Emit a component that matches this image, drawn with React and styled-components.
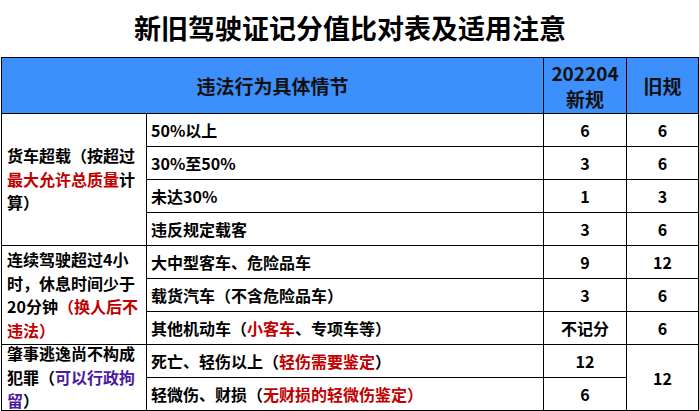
import React from "react";
import styled, { createGlobalStyle } from "styled-components";

const GlobalStyle = createGlobalStyle`
  html, body {
    margin: 0;
    padding: 0;
    background: #ffffff;
  }
  body {
    font-family: "Noto Sans CJK SC", "Noto Sans", sans-serif;
    color: #000;
  }
`;

const Page = styled.div`
  width: 699px;
  height: 411px;
  overflow: hidden;
  padding-left: 1px;
  box-sizing: border-box;
`;

const Title = styled.h1`
  margin: 0;
  height: 57px;
  display: flex;
  align-items: center;
  justify-content: center;
  padding-bottom: 2px;
  box-sizing: border-box;
  font-size: 27px;
  font-weight: 700;
  letter-spacing: 0;
  color: #000;
`;

const Table = styled.table`
  border-collapse: collapse;
  table-layout: fixed;
  width: 697px;

  td,
  th {
    border: 1px solid #000;
    padding: 0;
    box-sizing: border-box;
  }
`;

const Row = styled.tr`
  height: ${(p) => p.$h}px;
`;

const HeadCell = styled.th`
  background: #3d8ffb;
  font-size: 19px;
  font-weight: 700;
  line-height: 26px;
  color: #111;
  text-align: center;
  vertical-align: middle;
`;

const GroupCell = styled.td`
  font-size: 16px;
  font-weight: 700;
  line-height: 23.5px;
  padding-left: 5px !important;
  vertical-align: middle;
  white-space: nowrap;
  overflow: hidden;
`;

const GroupText = styled.div`
  margin: -4px 0 -4px;
`;

const ItemCell = styled.td`
  font-size: 16px;
  font-weight: 700;
  line-height: 22px;
  padding-left: 4px !important;
  vertical-align: middle;
  white-space: nowrap;
  overflow: hidden;
`;

const NumCell = styled.td`
  font-size: 16px;
  font-weight: 700;
  line-height: 22px;
  text-align: center;
  vertical-align: middle;
`;

const Red = styled.span`
  color: #c00000;
`;

const Purple = styled.span`
  color: #4a1aa0;
`;

const rows = [
  {
    group: (
      <>
        货车超载（按超过
        <br />
        <Red>最大允许总质量</Red>计
        <br />
        算）
      </>
    ),
    span: 4,
    items: [
      { text: "50%以上", now: "6", old: "6" },
      { text: "30%至50%", now: "3", old: "6" },
      { text: "未达30%", now: "1", old: "3" },
      { text: "违反规定载客", now: "3", old: "6" },
    ],
  },
  {
    group: (
      <>
        连续驾驶超过4小
        <br />
        时，休息时间少于
        <br />
        20分钟<Red>（换人后不</Red>
        <br />
        <Red>违法）</Red>
      </>
    ),
    span: 3,
    items: [
      { text: "大中型客车、危险品车", now: "9", old: "12" },
      { text: "载货汽车（不含危险品车）", now: "3", old: "6" },
      {
        text: (
          <>
            其他机动车（<Red>小客车</Red>、专项车等）
          </>
        ),
        now: "不记分",
        old: "6",
      },
    ],
  },
  {
    group: (
      <>
        肇事逃逸尚不构成
        <br />
        犯罪（<Purple>可以行政拘</Purple>
        <br />
        <Purple>留</Purple>）
      </>
    ),
    span: 2,
    items: [
      {
        text: (
          <>
            死亡、轻伤以上（<Red>轻伤需要鉴定</Red>）
          </>
        ),
        now: "12",
        old: "12",
        oldSpan: 2,
      },
      {
        text: (
          <>
            轻微伤、财损（<Red>无财损的轻微伤鉴定）</Red>
          </>
        ),
        now: "6",
        old: null,
      },
    ],
  },
];

export default function App() {
  return (
    <Page>
      <GlobalStyle />
      <Title>新旧驾驶证记分值比对表及适用注意</Title>
      <Table>
        <colgroup>
          <col style={{ width: 145 }} />
          <col style={{ width: 397 }} />
          <col style={{ width: 83 }} />
          <col style={{ width: 72 }} />
        </colgroup>
        <tbody>
          <Row $h={56}>
            <HeadCell colSpan={2}>违法行为具体情节</HeadCell>
            <HeadCell>
              202204
              <br />
              新规
            </HeadCell>
            <HeadCell>旧规</HeadCell>
          </Row>
          {rows.map((g, gi) =>
            g.items.map((it, ii) => (
              <Row $h={33} key={`${gi}-${ii}`}>
                {ii === 0 && (
                  <GroupCell rowSpan={g.span}>
                    <GroupText>{g.group}</GroupText>
                  </GroupCell>
                )}
                <ItemCell>{it.text}</ItemCell>
                <NumCell>{it.now}</NumCell>
                {it.old !== null && <NumCell rowSpan={it.oldSpan || 1}>{it.old}</NumCell>}
              </Row>
            ))
          )}
        </tbody>
      </Table>
    </Page>
  );
}
